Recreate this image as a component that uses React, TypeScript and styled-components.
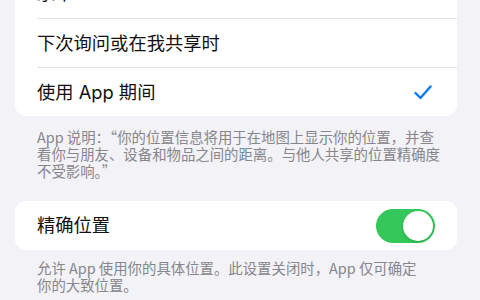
import React from "react";
import styled, { createGlobalStyle } from "styled-components";

const Global = createGlobalStyle`
  html, body { margin: 0; padding: 0; background: #f2f2f7; }
  body { width: 480px; height: 300px; overflow: hidden; font-family: "Inter", "Noto Sans CJK SC", sans-serif; }
`;

const Page = styled.div`
  width: 480px;
  height: 300px;
  overflow: hidden;
  background: #f2f2f7;
  display: flex;
  flex-direction: column;
  padding: 0 23px 0 15px;
  box-sizing: border-box;
`;

const Card = styled.div<{ $offset?: number }>`
  background: #ffffff;
  border-radius: 11px;
  margin-top: ${(p) => p.$offset ?? 0}px;
  display: flex;
  flex-direction: column;
  flex-shrink: 0;
`;

const Row = styled.div<{ $divider?: boolean }>`
  height: 49px;
  margin-left: 22px;
  padding-right: 22px;
  display: flex;
  align-items: center;
  justify-content: space-between;
  border-top: ${(p) => (p.$divider ? "1px solid #e3e3e7" : "none")};
  box-sizing: border-box;
`;

const Label = styled.span`
  font-size: 18.3px;
  color: #111111;
  line-height: 1;
`;

const Footer = styled.p<{ $bottom?: number; $top: number }>`
  margin: 0;
  padding: ${(p) => p.$top}px 0 0 22px;
  margin-bottom: ${(p) => p.$bottom ?? 0}px;
  font-family: "Noto Sans CJK SC", sans-serif;
  font-size: 14.4px;
  line-height: 17px;
  color: #86868b;
  white-space: nowrap;
  flex-shrink: 0;
`;

const Toggle = styled.div`
  width: 59px;
  height: 34px;
  border-radius: 17px;
  background: #34c759;
  display: flex;
  align-items: center;
  justify-content: flex-end;
  padding: 0 2px;
  box-sizing: border-box;
`;

const Knob = styled.div`
  width: 30px;
  height: 30px;
  border-radius: 50%;
  background: #ffffff;
  box-shadow: 0 1px 3px rgba(0, 0, 0, 0.18);
`;

const Check = () => (
  <svg width="18" height="15" viewBox="0 0 18 15" style={{ marginRight: 3 }}>
    <path d="M1.5 8 L6.5 13 L16.5 1.5" fill="none" stroke="#0a7aff" strokeWidth="2.4" strokeLinecap="round" strokeLinejoin="round" />
  </svg>
);

export default function App() {
  return (
    <>
      <Global />
      <Page>
        <Card $offset={-31}>
          <Row>
            <Label>永不</Label>
          </Row>
          <Row $divider>
            <Label>下次询问或在我共享时</Label>
          </Row>
          <Row $divider>
            <Label>使用 App 期间</Label>
            <Check />
          </Row>
        </Card>
        <Footer $top={12} $bottom={22}>
          App 说明：“你的位置信息将用于在地图上显示你的位置，并查
          <br />
          看你与朋友、设备和物品之间的距离。与他人共享的位置精确度
          <br />
          不受影响。”
        </Footer>
        <Card>
          <Row>
            <Label>精确位置</Label>
            <Toggle>
              <Knob />
            </Toggle>
          </Row>
        </Card>
        <Footer $top={9}>
          允许 App 使用你的具体位置。此设置关闭时，App 仅可确定
          <br />
          你的大致位置。
        </Footer>
      </Page>
    </>
  );
}
